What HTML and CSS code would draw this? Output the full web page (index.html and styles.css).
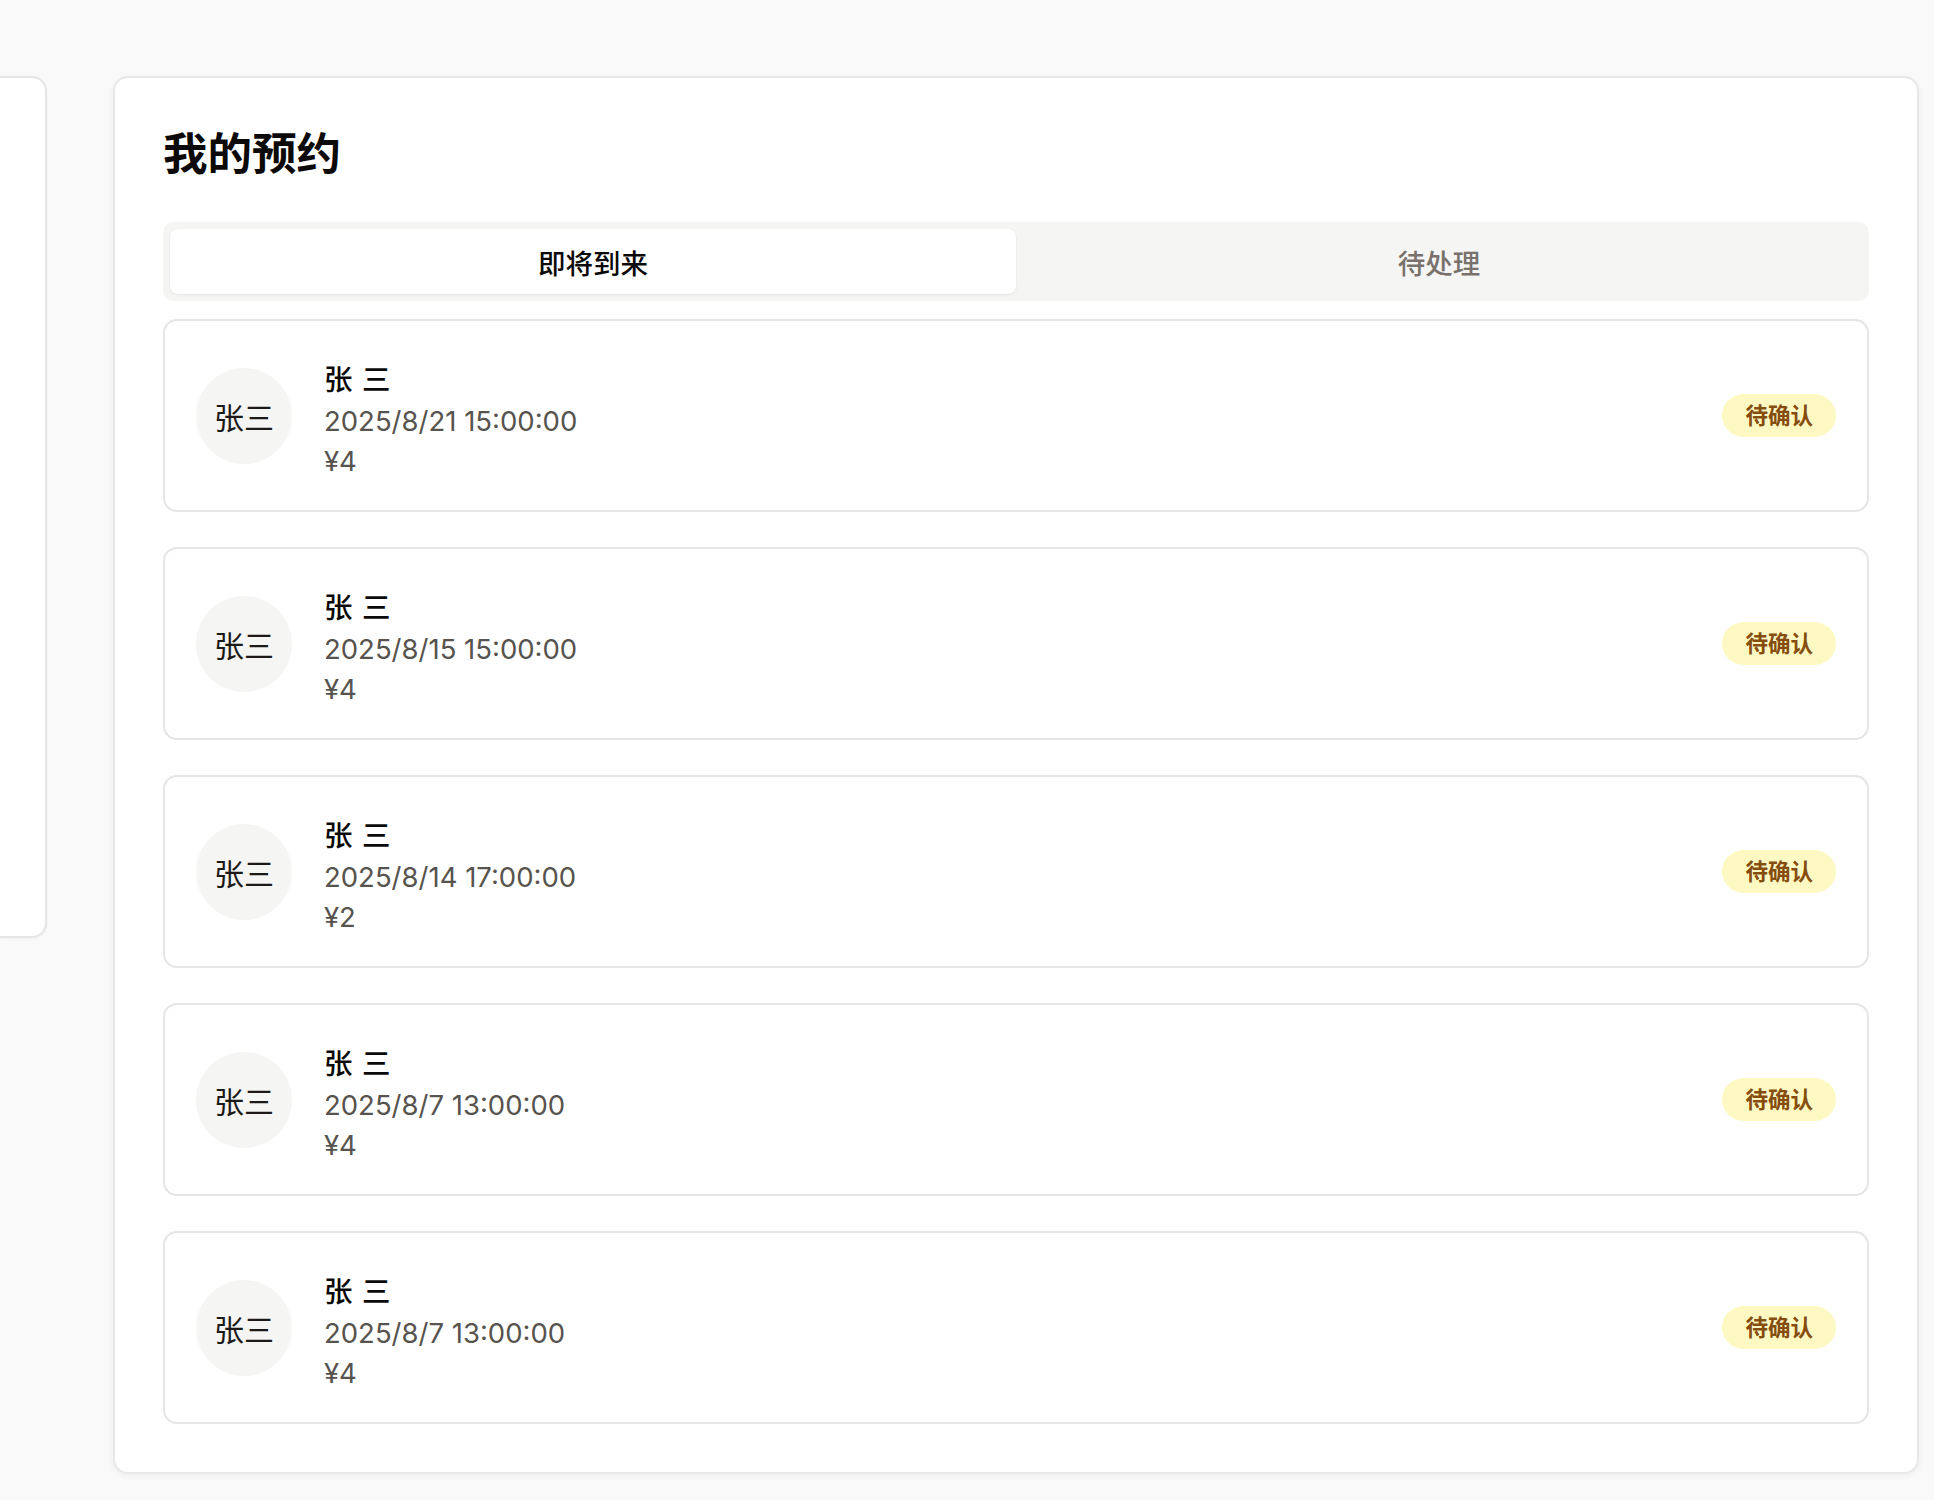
FILE: index.html
```html
<!DOCTYPE html>
<html lang="zh-CN">
<head>
<meta charset="utf-8">
<title>我的预约</title>
<link rel="stylesheet" href="styles.css">
</head>
<body>
<div class="layout">
  <aside class="side-panel"></aside>
  <main class="main-card">
    <h1 class="title">我的预约</h1>
    <div class="tabs">
      <div class="tab tab-active">即将到来</div>
      <div class="tab">待处理</div>
    </div>
    <div class="list">
      <div class="booking">
        <div class="avatar">张三</div>
        <div class="info">
          <div class="name">张 三</div>
          <div class="meta">2025/8/21 15:00:00</div>
          <div class="meta">¥4</div>
        </div>
        <span class="badge">待确认</span>
      </div>
      <div class="booking">
        <div class="avatar">张三</div>
        <div class="info">
          <div class="name">张 三</div>
          <div class="meta">2025/8/15 15:00:00</div>
          <div class="meta">¥4</div>
        </div>
        <span class="badge">待确认</span>
      </div>
      <div class="booking">
        <div class="avatar">张三</div>
        <div class="info">
          <div class="name">张 三</div>
          <div class="meta">2025/8/14 17:00:00</div>
          <div class="meta">¥2</div>
        </div>
        <span class="badge">待确认</span>
      </div>
      <div class="booking">
        <div class="avatar">张三</div>
        <div class="info">
          <div class="name">张 三</div>
          <div class="meta">2025/8/7 13:00:00</div>
          <div class="meta">¥4</div>
        </div>
        <span class="badge">待确认</span>
      </div>
      <div class="booking">
        <div class="avatar">张三</div>
        <div class="info">
          <div class="name">张 三</div>
          <div class="meta">2025/8/7 13:00:00</div>
          <div class="meta">¥4</div>
        </div>
        <span class="badge">待确认</span>
      </div>
    </div>
  </main>
</div>
</body>
</html>
```

FILE: styles.css
```css
* { box-sizing: border-box; }

html, body {
  margin: 0;
  padding: 0;
}

body {
  background: #f9f9f9;
  font-family: Inter, "Noto Sans CJK SC", sans-serif;
  color: #0c0a09;
  min-height: 1500px;
}

.layout {
  display: flex;
  align-items: flex-start;
  gap: 66px;
  padding-top: 76px;
  padding-right: 15px;
}

.side-panel {
  flex: 0 0 47px;
  height: 862px;
  background: #ffffff;
  border: 2px solid #e6e6e6;
  border-left: none;
  border-radius: 0 15px 15px 0;
  box-shadow: 0 1px 3px rgba(0, 0, 0, 0.04);
}

.main-card {
  flex: 1 1 auto;
  background: #ffffff;
  border: 2px solid #e8e8e8;
  border-radius: 15px;
  padding: 48px;
  box-shadow: 0 2px 6px rgba(0, 0, 0, 0.05);
}

.title {
  margin: 0 0 40px 0;
  height: 56px;
  font-size: 44.5px;
  line-height: 56px;
  font-weight: 700;
  color: #0c0a09;
}

.tabs {
  display: grid;
  grid-template-columns: 1fr 1fr;
  height: 79px;
  padding: 7px;
  background: #f5f5f4;
  border-radius: 10px;
  margin-bottom: 18px;
}

.tab {
  display: flex;
  align-items: center;
  justify-content: center;
  font-size: 27.5px;
  font-weight: 500;
  color: #78716c;
  border-radius: 8px;
}

.tab-active {
  background: #ffffff;
  color: #0c0a09;
  box-shadow: 0 1px 3px rgba(0, 0, 0, 0.08);
}

.list {
  display: flex;
  flex-direction: column;
  gap: 35px;
}

.booking {
  display: flex;
  align-items: center;
  height: 193px;
  padding: 0 31px;
  border: 2px solid #e5e5e5;
  border-radius: 14px;
  background: #ffffff;
}

.avatar {
  flex: 0 0 96px;
  width: 96px;
  height: 96px;
  border-radius: 50%;
  background: #f5f5f4;
  display: flex;
  align-items: center;
  justify-content: center;
  font-size: 30px;
  color: #1c1917;
}

.info {
  flex: 1 1 auto;
  margin-left: 32px;
  padding-top: 8px;
}

.name {
  font-size: 28.5px;
  line-height: 42px;
  font-weight: 500;
  word-spacing: 2px;
  color: #0c0a09;
}

.meta {
  font-size: 27.5px;
  line-height: 40px;
  color: #57534e;
}

.badge {
  flex: 0 0 auto;
  height: 43px;
  line-height: 43px;
  padding: 0 23px;
  border-radius: 9999px;
  background: #fef9c3;
  color: #854d0e;
  font-size: 22.5px;
  font-weight: 600;
}
```
